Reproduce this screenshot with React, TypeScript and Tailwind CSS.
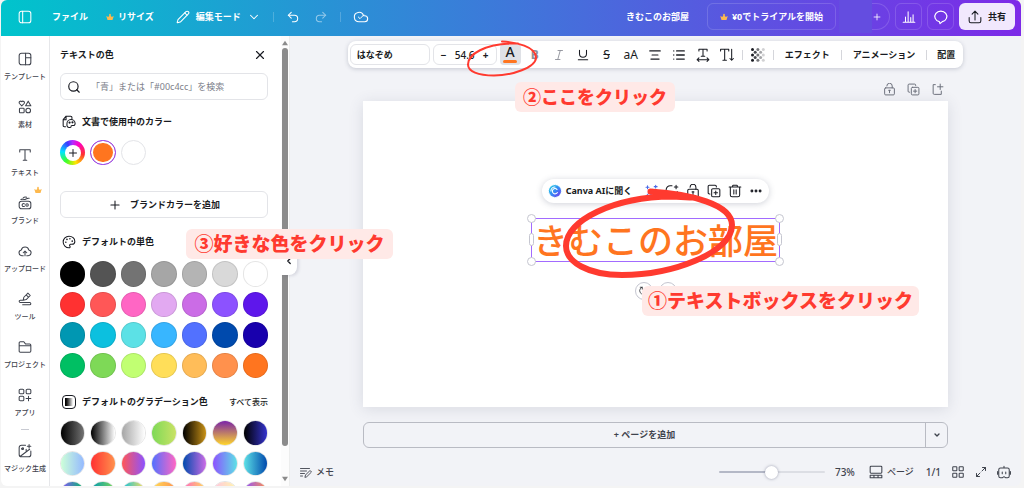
import React from 'react';
import {
  Check,
  ChevronDown,
  ChevronLeft,
  Cloud,
  Ellipsis,
  List,
  Maximize2,
  Palette,
  Pencil,
  Plus,
  Redo2,
  Search,
  TextAlignCenter,
  Underline,
  Undo2,
  X,
} from 'lucide-react';

type IconProps = { className?: string; children?: React.ReactNode };

const Icon: React.FC<IconProps> = ({ className = 'size-3.5', children }) => (
  <svg
    className={className}
    viewBox="0 0 24 24"
    fill="none"
    stroke="currentColor"
    strokeWidth="1.8"
    strokeLinecap="round"
    strokeLinejoin="round"
    aria-hidden="true"
  >
    {children}
  </svg>
);

const Crown: React.FC<{ className?: string }> = ({ className = 'size-2' }) => (
  <svg className={className} viewBox="0 0 16 14" fill="#fdb94e" aria-hidden="true">
    <path d="M3 13h10l2.5-8-4.2 2.2L8 1 4.7 7.2.5 5z" />
    <circle cx="8" cy="1.8" r="1.5" />
  </svg>
);

const LockIcon: React.FC<IconProps> = ({ className }) => (
  <Icon className={className}>
    <rect x="3" y="9" width="18" height="13" rx="2" />
    <path d="M7 5.500a5 5 0 0 1 10 0V9M12 18v-4.500M10.500 13.500h3" />
  </Icon>
);

const CopyIcon: React.FC<IconProps> = ({ className }) => (
  <Icon className={className}>
    <rect x="8" y="8" width="14" height="14" rx="2" />
    <path d="M5 17H4a2 2 0 0 1-2-2V4a2 2 0 0 1 2-2h10a2 2 0 0 1 2 2v1M15 12v6M12 15h6" />
  </Icon>
);

const NAV_ITEMS = [
  {
    label: 'テンプレート',
    icon: (
      <Icon>
        <rect x="2" y="2" width="20" height="20" rx="4" />
        <path d="M13 2v20M13 10h9" />
      </Icon>
    ),
  },
  {
    label: '素材',
    icon: (
      <Icon>
        <path d="M6.5 10 2.5 6a2.3 2.3 0 0 1 4-3 2.3 2.3 0 0 1 4 3zM17.5 2l4.5 8h-9z" />
        <rect x="2.5" y="14" width="8" height="8" rx="1.5" />
        <circle cx="17.5" cy="18" r="4" />
      </Icon>
    ),
  },
  {
    label: 'テキスト',
    icon: (
      <Icon>
        <path d="M3 7V3h18v4M12 3v18M9 21h6" />
      </Icon>
    ),
  },
  {
    label: 'ブランド',
    crown: true,
    icon: (
      <Icon>
        <rect x="2" y="9" width="20" height="13" rx="4" />
        <path d="M5 6c3-2 5 1 8-.5S17 3 19 4M9 3c2-2 4-1.5 6-1M11 13.5a2.5 2.5 0 1 0 0 4" />
        <circle cx="15.5" cy="15.5" r="2.2" />
      </Icon>
    ),
  },
  {
    label: 'アップロード',
    icon: (
      <Icon>
        <path d="M9 20H6.5a5 5 0 0 1-.7-9.900 6.500 6.500 0 0 1 12.600 0A5 5 0 0 1 17.500 20H15M12 20v-8M9 15l3-3 3 3" />
      </Icon>
    ),
  },
  {
    label: 'ツール',
    icon: (
      <Icon>
        <path d="m9 14 1-5 7-7 4 4-7 7zM14 5l4 4M8 14H4a2 2 0 0 0 0 4h16a2 2 0 0 1 0 4H8" />
      </Icon>
    ),
  },
  {
    label: 'プロジェクト',
    icon: (
      <Icon>
        <path d="M2 10V5a2 2 0 0 1 2-2h6l3 4h7a2 2 0 0 1 2 2v10a2 2 0 0 1-2 2H4a2 2 0 0 1-2-2v-9h20" />
      </Icon>
    ),
  },
  {
    label: 'アプリ',
    icon: (
      <Icon>
        <rect x="2" y="2" width="8" height="8" rx="2" />
        <rect x="14" y="2" width="8" height="8" rx="2" />
        <rect x="2" y="14" width="8" height="8" rx="2" />
        <path d="M18 14v8M14 18h8" />
      </Icon>
    ),
  },
];

const SOLID_COLORS = [
  'bg-[#000000]', 'bg-[#545454]', 'bg-[#737373]', 'bg-[#a6a6a6]', 'bg-[#b4b4b4]', 'bg-[#d9d9d9]', 'bg-[#ffffff]',
  'bg-[#ff3131]', 'bg-[#ff5757]', 'bg-[#ff66c4]', 'bg-[#e2a9f1]', 'bg-[#cb6ce6]', 'bg-[#8c52ff]', 'bg-[#5e17eb]',
  'bg-[#0097b2]', 'bg-[#0cc0df]', 'bg-[#5ce1e6]', 'bg-[#38b6ff]', 'bg-[#5271ff]', 'bg-[#004aad]', 'bg-[#1800ad]',
  'bg-[#00bf63]', 'bg-[#7ed957]', 'bg-[#c1ff72]', 'bg-[#ffde59]', 'bg-[#ffbd59]', 'bg-[#ff914d]', 'bg-[#ff751f]',
];

const GRADIENTS = [
  'bg-linear-to-r/srgb from-[#000000] to-[#737373]',
  'bg-linear-to-r/srgb from-[#000000] to-[#ffffff]',
  'bg-linear-to-r/srgb from-[#a6a6a6] to-[#ffffff]',
  'bg-linear-to-r/srgb from-[#7ed957] to-[#c9e265]',
  'bg-linear-to-r/srgb from-[#000000] to-[#c89116]',
  'bg-linear-to-b/srgb from-[#7a24a8] to-[#ffd52b]',
  'bg-linear-to-r/srgb from-[#000000] to-[#3533cd]',
  'bg-linear-to-r/srgb from-[#cdffd8] to-[#94b9ff]',
  'bg-linear-to-r/srgb from-[#ff3131] to-[#ff914d]',
  'bg-linear-to-r/srgb from-[#ff5757] to-[#8c52ff]',
  'bg-linear-to-r/srgb from-[#5170ff] to-[#ff66c4]',
  'bg-linear-to-r/srgb from-[#004aad] to-[#cb6ce6]',
  'bg-linear-to-r/srgb from-[#8c52ff] to-[#5ce1e6]',
  'bg-linear-to-r/srgb from-[#5de0e6] to-[#004aad]',
  'bg-linear-to-r/srgb from-[#8c52ff] to-[#00bf63]',
  'bg-linear-to-r/srgb from-[#0097b2] to-[#7ed957]',
  'bg-linear-to-r/srgb from-[#0cc0df] to-[#ffde59]',
  'bg-linear-to-r/srgb from-[#ffde59] to-[#ff914d]',
  'bg-linear-to-r/srgb from-[#ff66c4] to-[#ffde59]',
  'bg-linear-to-r/srgb from-[#ffc4e1] to-[#fff7ad]',
  'bg-linear-to-r/srgb from-[#8c52ff] to-[#ff914d]',
];

const Header: React.FC = () => (
  <header className="flex h-9 shrink-0 items-center bg-linear-to-r/srgb from-[#00c4cc] to-[#7d2ae8] pr-1.5 pb-[3px] pl-[17px] font-bold text-white">
    <button aria-label="サイドバー">
      <Icon>
        <rect x="2" y="2" width="20" height="20" rx="4" />
        <path d="M8 2v20" />
      </Icon>
    </button>
    <button className="ml-5">ファイル</button>
    <button className="ml-[18px] flex items-center gap-1">
      <Crown />
      リサイズ
    </button>
    <button className="ml-[22px] flex items-center gap-1.5">
      <Pencil className="size-3.5" strokeWidth={1.8} />
      編集モード
      <ChevronDown className="size-3.5" strokeWidth={1.8} />
    </button>
    <span className="ml-3 h-2.5 w-px bg-white/20" />
    <button className="ml-3" aria-label="元に戻す">
      <Undo2 className="size-3.5" strokeWidth={1.8} />
    </button>
    <button className="ml-3.5 opacity-50" aria-label="やり直し">
      <Redo2 className="size-3.5" strokeWidth={1.8} />
    </button>
    <span className="ml-3 h-2.5 w-px bg-white/20" />
    <button className="relative ml-3" aria-label="保存済み">
      <Cloud className="size-4" strokeWidth={1.6} />
      <Check className="absolute top-1 left-1 size-2" strokeWidth={3} />
    </button>

    <span className="ml-auto">きむこのお部屋</span>
    <button className="ml-[18px] flex h-[27px] w-[129px] items-center justify-center gap-1 rounded-md border border-white/15">
      <Crown />
      ¥0でトライアルを開始
    </button>
    <div className="ml-[3px] h-[33px] w-[33px] self-start bg-[#644de0]" />
    <button
      className="flex h-[27px] w-[18px] items-center rounded-r-full border border-l-0 border-white/15"
      aria-label="メンバーを追加"
    >
      <Plus className="size-2.5" />
    </button>
    <button
      className="ml-[5px] flex h-[27px] w-[27px] items-center justify-center rounded-md border border-white/15"
      aria-label="インサイト"
    >
      <Icon>
        <path d="M2 21h20M6 20v-8M10.5 20V3M15 20v-7M19 20V8" />
      </Icon>
    </button>
    <button
      className="ml-[5px] flex h-[27px] w-[27px] items-center justify-center rounded-md border border-white/15"
      aria-label="コメント"
    >
      <Icon className="size-4">
        <path d="M9.5 19A9 8 0 1 1 14 19l-3.5 3z" />
      </Icon>
    </button>
    <button className="ml-[5px] flex h-[27px] w-14 items-center justify-center gap-1.5 rounded-md bg-[#f1e8fd] text-[#191b22]">
      <Icon>
        <path d="M2 13v6a3 3 0 0 0 3 3h14a3 3 0 0 0 3-3v-6M12 17V2M7 7l5-5 5 5" />
      </Icon>
      共有
    </button>
  </header>
);

const Sidebar: React.FC = () => (
  <nav className="flex w-[49px] shrink-0 flex-col border-r border-[#e6e7ea] bg-white pt-4 text-[#3f434d]">
    <div className="flex flex-col gap-[17px]">
      {NAV_ITEMS.map((item) => (
        <a key={item.label} href="#" className="relative flex flex-col items-center gap-[5px]">
          {item.icon}
          {item.crown && <Crown className="absolute -top-2.5 right-[7px] size-2" />}
          <span className="text-[7px] leading-3 font-medium whitespace-nowrap">{item.label}</span>
        </a>
      ))}
    </div>
    <div className="mx-auto mt-2.5 mb-3.5 h-px w-2 shrink-0 bg-[#c8cad2]" />
    <a href="#" className="flex flex-col items-center gap-[5px]">
      <Icon>
        <path d="M13 2H6a4 4 0 0 0-4 4v12a4 4 0 0 0 4 4h12a4 4 0 0 0 4-4v-6M4 21 20 9M19 1v6M16 4h6M14 9v3M6 8h3" />
        <circle cx="8" cy="8" r="1.5" />
      </Icon>
      <span className="text-[7px] leading-3 font-medium whitespace-nowrap">マジック生成</span>
    </a>
  </nav>
);

const SectionTitle: React.FC<{ icon: React.ReactNode; children: React.ReactNode }> = ({ icon, children }) => (
  <h2 className="flex h-5 items-center gap-1.5 font-bold">
    <span className="ml-0.5">{icon}</span>
    {children}
  </h2>
);

const ColorPanel: React.FC = () => (
  <aside className="flex w-60 shrink-0 bg-white">
    <div className="min-w-0 flex-1 overflow-hidden pt-[9px] pr-[13px] pl-2.5">
      <div className="flex h-5 items-center justify-between">
        <h1 className="font-bold">テキストの色</h1>
        <button className="mr-px" aria-label="閉じる">
          <X className="size-3.5" strokeWidth={2} />
        </button>
      </div>

      <label className="mt-2 flex h-[27px] items-center gap-2.5 rounded-md border border-[#e3e4e8] px-1.5">
        <Search className="size-3.5" />
        <input
          type="search"
          aria-label="色を検索"
          placeholder="「青」または「#00c4cc」を検索"
          className="min-w-0 flex-1 outline-none placeholder:text-[#7d808a]"
        />
      </label>

      <div className="mt-3">
        <SectionTitle
          icon={
            <Icon>
              <path d="M6 20H4a2 2 0 0 1-2-2V8l5-6h8a2 2 0 0 1 2 2v2M2 8h5V2M13 21.5c-4 .5-5-3-4.500-6.500a7 7 0 0 1 14-.5c0 3-2 4-4 3.500s-3 .5-3 2-1.500 1.500-2.500 1.500z" />
              <circle cx="13" cy="13" r="1" />
              <circle cx="18" cy="12.5" r="1" />
            </Icon>
          }
        >
          文書で使用中のカラー
        </SectionTitle>
      </div>
      <div className="mt-2 grid grid-cols-7 gap-[5px]">
        <button
          className="flex aspect-square items-center justify-center rounded-full bg-[conic-gradient(#b02bff,#ff00c8_10%,#ff3131_28%,#ffe600_45%,#3dff2b_60%,#00e5ff_76%,#3b3bff_92%,#b02bff)]"
          aria-label="新しいカラーを追加"
        >
          <span className="flex size-4 items-center justify-center rounded-full bg-white">
            <Plus className="size-3" />
          </span>
        </button>
        <button
          className="aspect-square rounded-full border border-[#8b3dff] bg-[#ff751f] ring-2 ring-white ring-inset"
          aria-label="オレンジ"
        />
        <button className="aspect-square rounded-full border border-[#e3e4e8] bg-white" aria-label="白" />
      </div>

      <button className="mt-[26px] flex h-[27px] w-full items-center justify-center gap-2 rounded-md border border-[#e3e4e8] font-bold">
        <Plus className="size-3.5" strokeWidth={1.8} />
        ブランドカラーを追加
      </button>

      <div className="mt-3.5">
        <SectionTitle icon={<Palette className="size-3.5" strokeWidth={1.8} />}>デフォルトの単色</SectionTitle>
      </div>
      <div className="mt-[9px] grid grid-cols-7 gap-[5px]">
        {SOLID_COLORS.map((color) => (
          <button
            key={color}
            aria-label={color.slice(4, 11)}
            className={`aspect-square rounded-full border border-black/10 ${color}`}
          />
        ))}
      </div>

      <div className="mt-3.5 flex items-center justify-between">
        <SectionTitle
          icon={
            <span className="flex size-3.5 items-center justify-center rounded-sm border border-[#191b22]">
              <span className="size-2 bg-linear-to-r from-black to-white" />
            </span>
          }
        >
          デフォルトのグラデーション色
        </SectionTitle>
        <a href="#" className="text-[8px] font-medium">
          すべて表示
        </a>
      </div>
      <div className="mt-2 grid grid-cols-7 gap-[5px]">
        {GRADIENTS.map((gradient, i) => (
          <button
            key={gradient}
            aria-label={`グラデーション${i + 1}`}
            className="aspect-square overflow-hidden rounded-full border border-black/10"
          >
            <span className={`block size-full ${gradient}`} />
          </button>
        ))}
      </div>
    </div>

    {/* scrollbar */}
    <div className="flex w-[9px] flex-col items-center border-r border-[#eceded] bg-[#fcfcfc] pt-1 pb-1">
      <svg className="size-1.5" viewBox="0 0 8 8" fill="#8b8b8b" aria-hidden="true">
        <path d="M4 1l4 6H0z" />
      </svg>
      <div className="mt-0.5 h-[398px] w-1.5 rounded-full bg-[#8b8b8b]" />
      <svg className="mt-auto size-1.5" viewBox="0 0 8 8" fill="#8b8b8b" aria-hidden="true">
        <path d="M4 7l4-6H0z" />
      </svg>
    </div>
  </aside>
);

const Divider = () => <span className="h-2.5 w-px bg-[#d5d6db]" />;

const Tool: React.FC<{ label: string; children: React.ReactNode }> = ({ label, children }) => (
  <button aria-label={label} className="flex w-6 items-center justify-center">
    {children}
  </button>
);

const Toolbar: React.FC = () => (
  <div className="mx-auto mt-[5px] flex h-[27px] w-fit items-center rounded-lg bg-white px-0.5 font-bold whitespace-nowrap shadow-[0_1px_4px_rgba(64,70,100,0.25)]">
    <button className="h-[21px] w-20 rounded-md border border-[#e3e4e8] px-1.5 text-left">はなぞめ</button>
    <div className="ml-[3px] flex h-[21px] w-16 items-center rounded-md border border-[#e3e4e8] text-[10px]">
      <button className="w-5" aria-label="小さく">−</button>
      <input aria-label="フォントサイズ" defaultValue="54.6" className="w-[22px] min-w-0 text-center font-medium" />
      <button className="w-5" aria-label="大きく">+</button>
    </div>
    <button
      aria-label="テキストの色"
      className="mr-0.5 ml-[3px] flex h-[21px] w-[21px] flex-col items-center rounded-sm bg-[#dfe1e6] text-sm leading-4 font-medium"
    >
      A
      <span className="h-[3px] w-3.5 rounded-full bg-[#ff751f]" />
    </button>
    <Tool label="太字"><span className="text-xs text-[#8d9099]">B</span></Tool>
    <Tool label="斜体">
      <Icon className="size-3 text-[#8d9099]"><path d="M10 3h9M5 21h9M14.5 3l-5 18" /></Icon>
    </Tool>
    <Tool label="下線"><Underline className="size-3.5" strokeWidth={1.8} /></Tool>
    <Tool label="取り消し線"><span className="text-xs font-normal line-through">S</span></Tool>
    <Tool label="大文字"><span className="text-xs font-normal">aA</span></Tool>
    <Tool label="配置揃え"><TextAlignCenter className="size-3.5" /></Tool>
    <Tool label="リスト"><List className="size-3.5" strokeWidth={2.4} /></Tool>
    <Tool label="スペース">
      <Icon><path d="M5 5V2h14v3M12 2v12M9 14h6M2 20h20M5 17l-3 3 3 3M19 17l3 3-3 3" /></Icon>
    </Tool>
    <Tool label="縦書き">
      <Icon><path d="M1 5V2h14v3M8 2v19M5 21h6M20 2v19M17 18l3 3 3-3" /></Icon>
    </Tool>
    <span className="w-[3px]" />
    <Divider />
    <span className="w-[3px]" />
    <Tool label="透明度">
      <svg className="size-3.5" viewBox="0 0 14 14" aria-hidden="true">
        {[0, 1, 2, 3, 4].map((col) =>
          [0, 1, 2, 3, 4]
            .filter((row) => (row + col) % 2 === 0)
            .map((row) => (
              <circle key={`${col}-${row}`} cx={1.5 + col * 2.7} cy={1.5 + row * 2.7} r="1.5" fill="#191b22" opacity={1 - col * 0.2} />
            ))
        )}
      </svg>
    </Tool>
    <span className="w-[3px]" />
    <Divider />
    <button className="mx-[11px]">エフェクト</button>
    <Divider />
    <button className="mx-[11px]">アニメーション</button>
    <Divider />
    <button className="mr-1.5 ml-2.5">配置</button>
  </div>
);

const Handle: React.FC<{ className: string }> = ({ className }) => (
  <span className={`absolute border border-[#c5c6d0] bg-white ${className}`} />
);

const Page: React.FC = () => (
  <section className="mt-[5px] flex aspect-[584/305] w-full flex-col items-center bg-white pt-[78px] shadow-[0_2px_14px_rgba(64,70,100,0.14)]">
    <div className="flex h-6 items-center rounded-full bg-white px-1.5 whitespace-nowrap shadow-[0_1px_6px_rgba(64,70,100,0.25)]">
      <button className="mr-3 flex items-center gap-1 font-bold">
        <svg className="size-3.5" viewBox="0 0 24 24" fill="none" aria-hidden="true">
          <defs>
            <linearGradient id="ai" x1="0" y1="0" x2="1" y2="1">
              <stop offset="0" stopColor="#12d5e0" />
              <stop offset="0.55" stopColor="#3b82f6" />
              <stop offset="1" stopColor="#7d2ae8" />
            </linearGradient>
          </defs>
          <circle cx="12" cy="12" r="10.5" fill="url(#ai)" stroke="#7ed8f5" strokeDasharray="2 2" />
          <path d="M15.5 9.5a4.5 4.5 0 1 0 .5 5M12 5a7 7 0 0 0-7 7" stroke="white" strokeWidth="1.8" strokeLinecap="round" />
        </svg>
        Canva AIに聞く
      </button>
      <div className="flex items-center gap-[7px]">
        <button aria-label="マジック作文">
          <Icon className="size-3.5 text-[#4a6be8]">
            <path d="m3 21 12-12 3 3L8 22c-2 1-4 1-5-1zM12 12l3 3M20 2v5M17.5 4.5h5M6 3v5M3.5 5.5h5M20 17v4" />
          </Icon>
        </button>
        <button aria-label="アニメート">
          <Icon>
            <path d="M12 3H9a7 7 0 0 0-7 7v4a7 7 0 0 0 7 7h6a6 6 0 0 0 6-6v-2M19 2v6M16 5h6" />
          </Icon>
        </button>
        <button aria-label="ロック"><LockIcon /></button>
        <button aria-label="複製"><CopyIcon /></button>
        <button aria-label="削除">
          <Icon>
            <path d="M2 5h20M8 5V3a1 1 0 0 1 1-1h6a1 1 0 0 1 1 1v2M4 5v14a3 3 0 0 0 3 3h10a3 3 0 0 0 3-3V5M10 10v7M14 10v7" />
          </Icon>
        </button>
        <button aria-label="その他"><Ellipsis className="size-3.5" strokeWidth={3} /></button>
      </div>
    </div>

    <div className="relative mt-[15px] flex h-11 w-[249px] items-center justify-center border border-[#a26bff] text-[35px] leading-none font-medium whitespace-nowrap text-[#ff751f]">
      きむこのお部屋
      <Handle className="-top-[5px] -left-[5px] size-[9px] rounded-full" />
      <Handle className="-top-[5px] -right-[5px] size-[9px] rounded-full" />
      <Handle className="-bottom-[5px] -left-[5px] size-[9px] rounded-full" />
      <Handle className="-right-[5px] -bottom-[5px] size-[9px] rounded-full" />
      <Handle className="top-3.5 -left-[3px] h-[13px] w-[5px] rounded-full" />
      <Handle className="top-3.5 -right-[3px] h-[13px] w-[5px] rounded-full" />
    </div>
    <div className="mt-5 flex gap-1.5">
      <button aria-label="回転" className="flex size-[18px] items-center justify-center rounded-full border border-[#c5c6d0]">
        <Icon className="size-2.5">
          <path d="M7 3a9 9 0 0 0-1 16M3 3h5v5M17 21a9 9 0 0 0 1-16M21 21h-5v-5" />
        </Icon>
      </button>
      <button aria-label="移動" className="flex size-[18px] items-center justify-center rounded-full border border-[#c5c6d0]">
        <Icon className="size-2.5">
          <path d="M12 2v20M2 12h20M9 5l3-3 3 3M9 19l3 3 3-3M5 9l-3 3 3 3M19 9l3 3-3 3" />
        </Icon>
      </button>
    </div>
  </section>
);

const Footer: React.FC = () => (
  <footer className="mt-auto flex h-7 items-center pr-2.5 pl-2.5 font-medium whitespace-nowrap text-[#3f434d]">
    <button className="flex items-center gap-1">
      <Icon className="size-3">
        <path d="M1 5h18M1 10h12M1 15h8M1 20h4M10 22l1-4L20 9l3 3-9 9z" />
      </Icon>
      メモ
    </button>
    <input
      type="range"
      aria-label="ズーム"
      defaultValue={50}
      className="ml-auto h-0.5 w-[106px] appearance-none rounded-full bg-linear-to-r from-[#b4b8c6] from-50% to-[#dcdee4] to-50% [&::-webkit-slider-thumb]:size-[13px] [&::-webkit-slider-thumb]:appearance-none [&::-webkit-slider-thumb]:rounded-full [&::-webkit-slider-thumb]:bg-white [&::-webkit-slider-thumb]:shadow-[0_0_3px_rgba(64,70,100,0.5)]"
    />
    <span className="ml-2.5 text-[10px]">73%</span>
    <button className="ml-3.5 flex items-center gap-1">
      <Icon>
        <rect x="2" y="2" width="20" height="12" rx="1.5" />
        <path d="M2 17.5h20V22H2zM8.5 17.5V22M15.5 17.5V22" />
      </Icon>
      ページ
    </button>
    <span className="ml-3 text-[10px]">1/1</span>
    <button className="ml-2.5" aria-label="グリッド表示">
      <Icon>
        <rect x="3" y="3" width="7" height="7" rx="1" />
        <rect x="14" y="3" width="7" height="7" rx="1" />
        <rect x="3" y="14" width="7" height="7" rx="1" />
        <rect x="14" y="14" width="7" height="7" rx="1" />
      </Icon>
    </button>
    <button className="ml-2.5" aria-label="全画面表示">
      <Maximize2 className="size-3" strokeWidth={2} />
    </button>
    <button className="ml-2.5" aria-label="アシスタント">
      <Icon>
        <path d="M9 22H6a3 3 0 0 1-3-3V8a3 3 0 0 1 3-3h12a3 3 0 0 1 3 3v11a3 3 0 0 1-3 3h-3l-3-2zM12 5V2M1 11v5M23 11v5M9 12v3M15 12v3" />
      </Icon>
    </button>
  </footer>
);

const Editor: React.FC = () => (
  <main className="flex min-w-0 flex-1 flex-col bg-[#f2f3f7]">
    <Toolbar />
    <div className="mt-3.5 px-[73px]">
      <div className="flex h-3.5 items-center justify-end gap-[11px] pr-1 text-[#6b6f7a]">
        <button aria-label="ページをロック"><LockIcon className="size-[13px]" /></button>
        <button aria-label="ページを複製"><CopyIcon className="size-[13px]" /></button>
        <button aria-label="ページを挿入">
          <Icon className="size-[13px]">
            <path d="M8 3H4v16a2 2 0 0 0 2 2h13v-6M17 2v10M12 7h10" />
          </Icon>
        </button>
      </div>
      <Page />
      <div className="mt-[15px] flex h-[26px] rounded-md border border-[#b9bbc3] font-bold text-[#3f434d]">
        <button className="flex-1">+ ページを追加</button>
        <button aria-label="ページの種類" className="flex w-[22px] items-center justify-center border-l border-[#b9bbc3]">
          <ChevronDown className="size-2" strokeWidth={4} />
        </button>
      </div>
    </div>
    <Footer />
  </main>
);

const Note: React.FC<{ className: string; children: React.ReactNode }> = ({ className, children }) => (
  <p
    className={`absolute flex h-[30px] items-center justify-center rounded-md bg-[#ffe9e7] font-black whitespace-nowrap text-[#ff3a2f] ${className}`}
  >
    {children}
  </p>
);

const App: React.FC = () => {
  return (
    <div className="h-screen bg-[#f4f4f4] pr-[3px] pb-0.5 pl-px font-['Noto_Sans','Noto_Sans_CJK_JP',sans-serif] text-[9px] leading-4 text-[#191b22]">
      <div className="relative flex h-full flex-col">
        <div className="flex h-full flex-col overflow-hidden rounded-md">
          <Header />
          <div className="flex min-h-0 flex-1">
            <Sidebar />
            <ColorPanel />
            <Editor />
          </div>
        </div>

        <button
          aria-label="パネルを閉じる"
          className="absolute top-[246px] left-[280px] flex h-[29px] w-4 items-center justify-center rounded-r-lg bg-white shadow-[2px_1px_3px_rgba(64,70,100,0.15)]"
        >
          <ChevronLeft className="size-2.5" strokeWidth={3} />
        </button>

        {/* hand-drawn circles */}
        <svg className="absolute top-[39px] left-[464px] h-10 w-[76px]" viewBox="465 39 76 40" fill="none" aria-hidden="true">
          <path
            d="M502 41.5c14 .5 34 5 34 16 0 10-24 18-42 18-16 0-26-4-26-11 0-11 18-20 42-21h8"
            stroke="#ff3a2f"
            strokeWidth="2"
            strokeLinecap="round"
          />
        </svg>
        <svg className="absolute top-[186px] left-[558px] h-24 w-[182px]" viewBox="559 186 182 96" fill="none" aria-hidden="true">
          <path
            d="M650.5 191.5C690 194 732 204 732 225c0 28-60 50-110 50-34 0-56-13-56-29 0-26 48-49 106-49.500l18 1"
            stroke="#ff3a2f"
            strokeWidth="6"
            strokeLinecap="round"
          />
        </svg>

        <Note className="top-[286px] left-[641px] w-[277px] text-[19px]">①テキストボックスをクリック</Note>
        <Note className="top-[82px] left-[514px] w-40 text-[18px]">②ここをクリック</Note>
        <Note className="top-[229px] left-[185px] w-[207px] text-[19px]">③好きな色をクリック</Note>
      </div>
    </div>
  );
};

export default App;
